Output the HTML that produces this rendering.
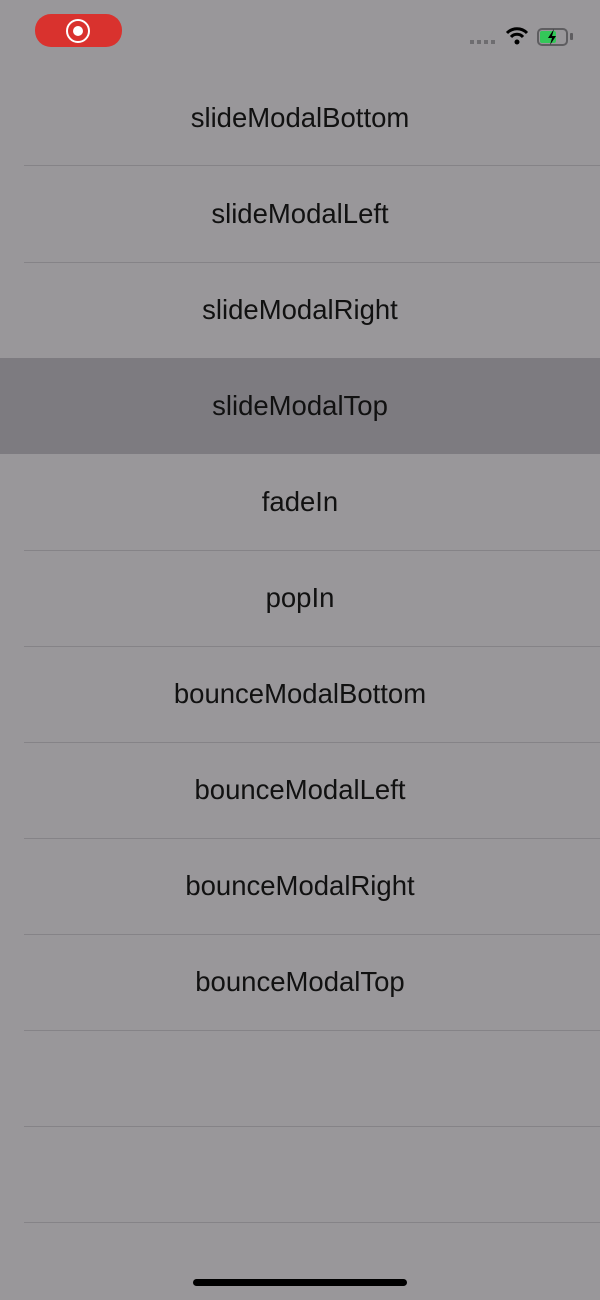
<!DOCTYPE html>
<html><head><meta charset="utf-8"><style>
body{margin:0;width:600px;height:1300px;background:#99979a;position:relative;overflow:hidden;font-family:"Liberation Sans",sans-serif}
.row{position:absolute;left:0;width:600px;height:96px;line-height:96px;text-align:center;font-size:27.5px;color:#111}
.sep{position:absolute;left:24px;right:0;height:1px;background:#858387}
.hl{position:absolute;left:0;top:358px;width:600px;height:96px;background:#7d7b80}
</style></head><body>
<div style="position:absolute;left:35px;top:14px;width:87px;height:33px;border-radius:16px;background:#d9322e"></div>
<div style="position:absolute;left:66px;top:19px;border:2px solid #fff;border-radius:50%;box-sizing:border-box;width:24px;height:24px"></div>
<div style="position:absolute;left:73px;top:26px;width:10px;height:10px;background:#fff;border-radius:50%"></div>
<div style="position:absolute;left:470px;top:40px;width:26px;height:4px;background:repeating-linear-gradient(90deg,#6e6d70 0 4px,transparent 4px 7px)"></div>
<svg style="position:absolute;left:505px;top:26px" width="24" height="20" viewBox="0 0 24 20"><path d="M2 7a14 14 0 0 1 20 0" stroke="#000" stroke-width="3" fill="none"/><path d="M6 11a8 8 0 0 1 12 0" stroke="#000" stroke-width="3" fill="none"/><circle cx="12" cy="16" r="2.5" fill="#000"/></svg>
<div style="position:absolute;left:537px;top:28px;width:31px;height:18px;border:2px solid #5e5d60;border-radius:5px;box-sizing:border-box"></div>
<div style="position:absolute;left:540px;top:31px;width:16px;height:12px;background:#34c759;border-radius:2px"></div>
<div style="position:absolute;left:570px;top:33px;width:3px;height:7px;background:#5e5d60;border-radius:1px"></div>
<svg style="position:absolute;left:545px;top:28px" width="14" height="18"><path d="M9 1L3 10h4l-2 7 6-9H7z" fill="#000"/></svg>
<div class="hl"></div>
<div class="row" style="top:70px">slideModalBottom</div>
<div class="row" style="top:166px">slideModalLeft</div>
<div class="row" style="top:262px">slideModalRight</div>
<div class="row" style="top:358px">slideModalTop</div>
<div class="row" style="top:454px">fadeIn</div>
<div class="row" style="top:550px">popIn</div>
<div class="row" style="top:646px">bounceModalBottom</div>
<div class="row" style="top:742px">bounceModalLeft</div>
<div class="row" style="top:838px">bounceModalRight</div>
<div class="row" style="top:934px">bounceModalTop</div>
<div class="sep" style="top:165px"></div>
<div class="sep" style="top:262px"></div>
<div class="sep" style="top:550px"></div>
<div class="sep" style="top:646px"></div>
<div class="sep" style="top:742px"></div>
<div class="sep" style="top:838px"></div>
<div class="sep" style="top:934px"></div>
<div class="sep" style="top:1030px"></div>
<div class="sep" style="top:1126px"></div>
<div class="sep" style="top:1222px"></div>
<div style="position:absolute;left:193px;top:1279px;width:214px;height:7px;border-radius:4px;background:#000"></div>
</body></html>
